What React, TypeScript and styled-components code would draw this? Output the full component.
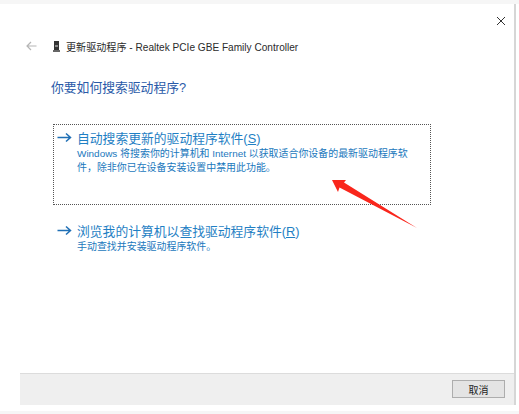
import React from 'react';
import styled, { createGlobalStyle } from 'styled-components';

const GlobalStyle = createGlobalStyle`
  html, body {
    margin: 0;
    padding: 0;
    background: #fff;
  }
  body {
    font-family: "Liberation Sans", "Noto Sans CJK SC", sans-serif;
  }
`;

const Page = styled.div`
  width: 519px;
  height: 414px;
  box-sizing: border-box;
  padding-top: 4px;
  display: flex;
  flex-direction: column;
  background: #fff;
  overflow: hidden;
  position: relative;
`;

const Strip = styled.div<{ $bottom?: boolean }>`
  position: absolute;
  left: 0;
  right: 0;
  ${(p) => (p.$bottom ? 'bottom: 0; height: 3px;' : 'top: 0; height: 4px;')}
  background: #f6f6f6;
`;

const Dialog = styled.div`
  width: 516px;
  height: 401px;
  box-sizing: border-box;
  border-right: 2px solid #d6d6d6;
  display: flex;
  flex-direction: column;
`;

const CloseRow = styled.div`
  height: 32px;
  display: flex;
  justify-content: flex-end;
  align-items: flex-start;
  padding: 12px 8px 0 0;
  box-sizing: border-box;
`;

const Body = styled.div`
  flex: 1;
  padding-left: 26px;
  display: flex;
  flex-direction: column;
`;

const Breadcrumb = styled.div`
  display: flex;
  align-items: center;
  height: 20px;
`;

const BackIcon = styled.svg`
  width: 11px;
  height: 10px;
  margin-right: 16px;
`;

const DeviceIcon = styled.svg`
  width: 7px;
  height: 11px;
  margin-right: 6px;
`;

const CrumbText = styled.span`
  font-size: 10.1px;
  color: #2b2b2b;
`;

const Heading = styled.h1`
  margin: 23px 0 0 25px;
  font-size: 12.8px;
  line-height: 18px;
  font-weight: 400;
  color: #2a5aa8;
`;

const Option = styled.div<{ $focused?: boolean }>`
  box-sizing: border-box;
  width: 378px;
  margin-left: 27px;
  height: ${(p) => (p.$focused ? '81px' : 'auto')};
  padding: 3px 0 0 3px;
  border: 1px dotted ${(p) => (p.$focused ? '#555' : 'transparent')};
`;

const OptionTitle = styled.div`
  display: flex;
  align-items: center;
  height: 18px;
  font-size: 12.8px;
  color: #1f7fc4;
`;

const OptionArrow = styled.svg`
  width: 15px;
  height: 11px;
  margin-right: 5px;
  flex: none;
`;

const Underlined = styled.span`
  text-decoration: underline;
`;

const OptionText = styled.div`
  margin: 1px 0 0 20px;
  width: 338px;
  font-size: 9.95px;
  line-height: 13.5px;
  color: #1a78bd;
`;

const Options = styled.div`
  margin-top: 27px;
  display: flex;
  flex-direction: column;
  gap: 12px;
`;

const Footer = styled.div`
  margin-left: 20px;
  height: 32px;
  box-sizing: border-box;
  border-top: 1px solid #dcdcdc;
  background: #efefef;
  display: flex;
  justify-content: flex-end;
  align-items: flex-start;
  padding: 6px 9px 0 0;
`;

const CancelButton = styled.button`
  width: 53px;
  height: 18px;
  padding: 0;
  box-sizing: border-box;
  border: 1px solid #adadad;
  background: #e4e4e4;
  font-family: inherit;
  font-size: 10px;
  color: #222;
`;

const RedArrow = styled.svg`
  position: absolute;
  left: 325px;
  top: 175px;
  width: 95px;
  height: 58px;
`;

const Arrow = () => (
  <OptionArrow viewBox="0 0 15 11">
    <path d="M0.5 5.5H13M9 1.5L13.5 5.5L9 9.5" fill="none" stroke="#1f6fb5" strokeWidth="1.5" />
  </OptionArrow>
);

export default function App() {
  return (
    <Page>
      <GlobalStyle />
      <Strip />
      <Dialog>
        <CloseRow>
          <svg width="10" height="10" viewBox="0 0 10 10">
            <path d="M1 1L9 9M9 1L1 9" stroke="#333" strokeWidth="1" fill="none" />
          </svg>
        </CloseRow>
        <Body>
          <Breadcrumb>
            <BackIcon viewBox="0 0 11 10">
              <path d="M10.5 5H1M5 1L1 5L5 9" fill="none" stroke="#b5b5b5" strokeWidth="1.2" />
            </BackIcon>
            <DeviceIcon viewBox="0 0 7 11">
              <rect x="1" y="0" width="5" height="9" fill="#333" />
              <rect x="2" y="4" width="3" height="2" fill="#8a8a8a" />
              <rect x="0" y="9" width="7" height="2" fill="#666" />
            </DeviceIcon>
            <CrumbText>更新驱动程序 - Realtek PCIe GBE Family Controller</CrumbText>
          </Breadcrumb>
          <Heading>你要如何搜索驱动程序?</Heading>
          <Options>
            <Option $focused>
              <OptionTitle>
                <Arrow />
                <span>
                  自动搜索更新的驱动程序软件(<Underlined>S</Underlined>)
                </span>
              </OptionTitle>
              <OptionText>
                Windows 将搜索你的计算机和 Internet 以获取适合你设备的最新驱动程序软件，除非你已在设备安装设置中禁用此功能。
              </OptionText>
            </Option>
            <Option>
              <OptionTitle>
                <Arrow />
                <span>
                  浏览我的计算机以查找驱动程序软件(<Underlined>R</Underlined>)
                </span>
              </OptionTitle>
              <OptionText>手动查找并安装驱动程序软件。</OptionText>
            </Option>
          </Options>
        </Body>
        <Footer>
          <CancelButton>取消</CancelButton>
        </Footer>
      </Dialog>
      <Strip $bottom />
      <RedArrow viewBox="0 0 95 58">
        <path d="M7 5L21 5L19 7.5L92 53L14.5 12.5L13 17Z" fill="#f9261c" />
      </RedArrow>
    </Page>
  );
}
